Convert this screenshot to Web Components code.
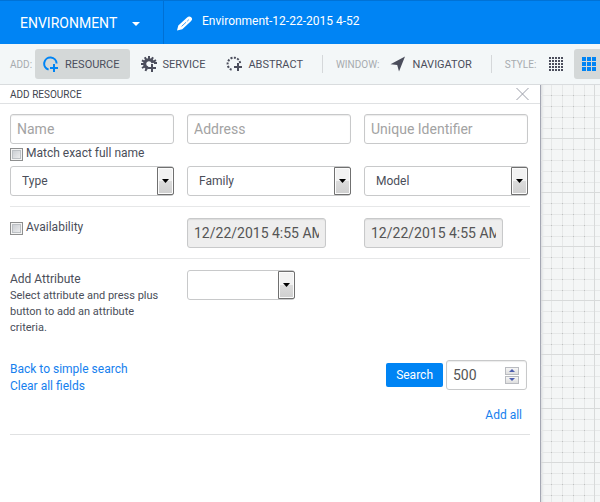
<!DOCTYPE html>
<html lang="en">
<head>
<meta charset="utf-8">
<meta name="viewport" content="width=device-width, initial-scale=1">
<title>Environment-12-22-2015 4-52</title>
<style>
  :root {
    --blue: #0084f4;
    --ink: #4a4e59;
    --icon: #4b4e5c;
    --muted: #a7abaf;
    --edge: #c8c9ca;
  }
  body {
    margin: 0;
    min-height: 100vh;
    display: flex;
    flex-direction: column;
    overflow: hidden;
    background: #fff;
    color: var(--ink);
    font: 12px/17px Roboto, "Liberation Sans", sans-serif;
  }
</style>
</head>
<body>
<app-header environment="Environment-12-22-2015 4-52"></app-header>
<app-toolbar></app-toolbar>
<app-workspace>
  <resource-panel slot="panel"></resource-panel>
  <grid-canvas></grid-canvas>
</app-workspace>

<script>
const define = (name, html, ready) => {
  const template = document.createElement('template');
  template.innerHTML = html;
  customElements.define(name, class extends HTMLElement {
    connectedCallback() {
      if (this.shadowRoot) return;
      const root = this.attachShadow({ mode: 'open' });
      root.append(template.content.cloneNode(true));
      if (ready) ready(this, root);
    }
  });
};

define('text-field', `
  <style>
    :host { display: block; min-width: 0; }
    input {
      display: block; width: 100%; height: 30px; box-sizing: border-box;
      padding: 0 6px; border: 1px solid var(--edge); border-radius: 3px;
      background: #fff; color: #555; font: inherit; font-size: 14px;
      box-shadow: inset 0 1px 1px rgba(0,0,0,.08);
    }
    input::placeholder { color: #a3a3a3; opacity: 1; }
    input:disabled { background: #eee; opacity: 1; }
  </style>
  <input type="text">`, (host, root) => {
    const input = root.querySelector('input');
    input.setAttribute('aria-label', host.getAttribute('label'));
    input.placeholder = host.getAttribute('placeholder') || '';
    input.value = host.getAttribute('value') || '';
    input.disabled = host.hasAttribute('disabled');
  });

define('select-field', `
  <style>
    :host { display: block; min-width: 0; }
    .box { display: grid; }
    select, .drop { grid-area: 1 / 1; }
    select {
      appearance: none; width: 100%; height: 30px; box-sizing: border-box; margin: 0;
      padding: 1px 20px 0 11px; border: 1px solid var(--edge); border-radius: 3px;
      background: #fff; color: var(--ink); font: inherit;
    }
    .drop {
      justify-self: end; width: 17px; height: 28px; margin-top: 1px; box-sizing: border-box;
      border: 1px solid #707070; border-radius: 0 2px 2px 0;
      box-shadow: inset 0 0 0 1px #fcfcfc; pointer-events: none;
      background: linear-gradient(#f2f2f2 50%, #dcdcdc 50%, #cfcfcf);
      display: grid; place-items: center;
    }
  </style>
  <div class="box">
    <select><option></option></select>
    <span class="drop"><svg width="7" height="4" viewBox="0 0 7 4"><path d="M0 0h7L3.500 4z"/></svg></span>
  </div>`, (host, root) => {
    root.querySelector('select').setAttribute('aria-label', host.getAttribute('label'));
    root.querySelector('option').textContent = host.getAttribute('value') || '';
  });

define('check-field', `
  <style>
    :host { display: block; }
    label { display: flex; gap: 3px; align-items: flex-start; line-height: 19px; }
    input {
      appearance: none; flex: none; width: 13px; height: 13px; margin: 4px 0 0; box-sizing: border-box;
      border: 1px solid #8e8f8f; background: linear-gradient(135deg, #c3c7cd, #f4f4f4);
      box-shadow: inset 0 0 0 1px #f4f4f4, inset 0 0 0 2px #bcc0c4;
    }
    input:checked { background: var(--blue); }
  </style>
  <label><input type="checkbox"><slot></slot></label>`);

define('number-field', `
  <style>
    :host { display: grid; width: 81px; }
    input, .spin { grid-area: 1 / 1; }
    input {
      appearance: textfield; width: 100%; height: 30px; box-sizing: border-box; margin: 0;
      padding: 0 24px 0 6px; border: 1px solid var(--edge); border-radius: 3px;
      color: #555; font: inherit; font-size: 14px; background: #fff;
      box-shadow: inset 0 1px 1px rgba(0,0,0,.08);
    }
    input::-webkit-inner-spin-button { appearance: none; }
    .spin { justify-self: end; align-self: center; margin-right: 8px; width: 14px; height: 17px; display: grid; gap: 1px; }
    button {
      display: grid; place-items: center; padding: 0; height: 8px; min-height: 0;
      border: 1px solid #b9bbc0; background: linear-gradient(#f6f6f6, #dedede);
    }
  </style>
  <input type="number" value="500" aria-label="Maximum results">
  <span class="spin">
    <button aria-label="Increase"><svg width="6" height="3" viewBox="0 0 6 3"><path d="M0 3L3 0l3 3z" fill="#4e5fae"/></svg></button>
    <button aria-label="Decrease"><svg width="6" height="3" viewBox="0 0 6 3"><path d="M0 0l3 3 3-3z" fill="#4e5fae"/></svg></button>
  </span>`, (host, root) => {
    const input = root.querySelector('input');
    const [up, down] = root.querySelectorAll('button');
    up.onclick = () => input.stepUp();
    down.onclick = () => input.stepDown();
  });

define('app-header', `
  <style>
    :host { display: flex; height: 44px; box-sizing: border-box; background: var(--blue); border-top: 1px solid #0072d6; color: #fff; }
    .menu {
      display: flex; align-items: center; gap: 15px; width: 164px; box-sizing: border-box; padding: 2px 0 0 20px;
      border: 0; border-right: 1px solid #0070d4; background: none; color: inherit; font: inherit; font-size: 14px;
    }
    .name { display: flex; align-items: center; gap: 9px; padding: 0 0 2px 13px; }
    .name svg { margin-top: 4px; }
    h1 { margin: 0; font: inherit; }
  </style>
  <button class="menu">ENVIRONMENT
    <svg width="8" height="4" viewBox="0 0 8 4"><path d="M0 0h8L4 4z" fill="#fff"/></svg>
  </button>
  <div class="name">
    <svg width="16" height="15" viewBox="0 0 16 15">
      <path d="M0 14.500L1.300 9.600 9.800 1.700Q12.200-.6 14.200 1.200 16.200 3.200 13.900 5.300L5.300 13.200z" fill="#fff"/>
      <path d="M4.600 10.400l4.600-4.300M10.200 5.200l1.600-1.500" stroke="#3d9ff5" fill="none"/>
    </svg>
    <h1></h1>
  </div>`, (host, root) => {
    root.querySelector('h1').textContent = host.getAttribute('environment');
  });

define('tool-button', `
  <style>
    :host { display: block; }
    button {
      display: flex; align-items: center; gap: 6px; height: 30px; padding: 0 10px 0 8px;
      border: 0; border-radius: 3px; background: none; color: inherit; font: inherit; white-space: nowrap;
    }
    :host([active]) button { background: #d4d8d8; }
    :host([icon-only]) button { gap: 0; padding: 0 8px; }
    ::slotted(svg) { display: block; flex: none; }
  </style>
  <button><slot name="icon"></slot><slot></slot></button>`, (host, root) => {
    if (host.hasAttribute('label')) root.querySelector('button').setAttribute('aria-label', host.getAttribute('label'));
  });

define('app-toolbar', `
  <style>
    :host { display: flex; align-items: center; height: 41px; box-sizing: border-box; padding-left: 10px; background: #f3f7f8; border-bottom: 1px solid #d9dcde; color: var(--icon); font-size: 11px; overflow: hidden; }
    .group { display: flex; align-items: center; flex: none; gap: 3px; }
    .group + .group {
      margin-left: 9px; padding-left: 14px;
      background: linear-gradient(#d5d8da, #d5d8da) left center / 1px 18px no-repeat;
    }
    .cap { color: var(--muted); font-size: 10px; }
    .style .cap { margin-right: 2px; }
  </style>
  <div class="group">
    <span class="cap">ADD:</span>
    <tool-button active>
      <svg slot="icon" width="16" height="16" viewBox="0 0 16 16" fill="none" stroke="#0084f4" stroke-width="2"><path d="M5.600 13.600A6.200 6.200 0 1 1 13.600 7.500M11 8v8M7 12h8"/></svg>RESOURCE</tool-button>
    <tool-button>
      <svg slot="icon" width="16" height="16" viewBox="0 0 16 16" fill="none" stroke="#4b4e5c"><path d="M7 12A4.200 4.200 0 1 1 12 7" stroke-width="3"/><path d="M8 0v3M3.800 1.200l1.300 2.300M.9 4.400l2.500 1.200M0 8h3M1 12l2.500-1.500M4.500 15l1-2.600M12 1.200l-1.300 2.300M15 4.200l-2.500 1.400M13 7h3" stroke-width="2"/><path d="M11 8v8M7 12h8" stroke-width="2"/></svg>SERVICE</tool-button>
    <tool-button>
      <svg slot="icon" width="16" height="16" viewBox="0 0 16 16" fill="none" stroke="#4b4e5c" stroke-width="2"><path d="M5.600 13.800A6.300 6.300 0 1 1 14.200 8" stroke-dasharray="2 1.400"/><path d="M12 7v8M8 11h8"/></svg>ABSTRACT</tool-button>
  </div>
  <div class="group">
    <span class="cap">WINDOW:</span>
    <tool-button>
      <svg slot="icon" width="16" height="16" viewBox="0 0 16 16"><path d="M15 .5L9 15.500 7.200 9 .5 8.200z" fill="#4b4e5c"/></svg>NAVIGATOR</tool-button>
  </div>
  <div class="group style">
    <span class="cap">STYLE:</span>
    <tool-button icon-only label="Small grid">
      <svg slot="icon" width="14" height="14" viewBox="0 0 14 14" id="small"></svg></tool-button>
    <tool-button icon-only active label="Large grid">
      <svg slot="icon" width="14" height="14" viewBox="0 0 14 14" id="large"></svg></tool-button>
  </div>`, (host, root) => {
    const cells = (count, pitch, size, color) => {
      let d = '';
      for (let y = 0; y < count; y++) for (let x = 0; x < count; x++)
        d += `M${x * pitch} ${y * pitch}h${size}v${size}h-${size}z`;
      return `<path fill="${color}" d="${d}"/>`;
    };
    root.getElementById('small').innerHTML = cells(5, 3, 2, '#4b4e5c');
    root.getElementById('large').innerHTML = cells(3, 5, 4, '#0084f4');
  });

define('app-workspace', `
  <style>
    :host { display: flex; flex: 1; }
    ::slotted([slot=panel]) { flex: 0 1 541px; min-width: 0; }
    ::slotted(grid-canvas) { flex: 1; }
  </style>
  <slot name="panel"></slot><slot></slot>`);

define('grid-canvas', `
  <style>
    :host { display: grid; min-width: 0; background: #f4f6f6; box-shadow: inset 3px 0 3px -2px #d5d7da; }
    svg { width: 100%; height: 100%; }
  </style>
  <svg aria-hidden="true" shape-rendering="crispEdges">
    <defs>
      <pattern id="grid" width="54" height="54" x="-1" y="-1" patternUnits="userSpaceOnUse">
        <path fill="#e6e8e8" d="M11 0h1v54h-1zM22 0h1v54h-1zM33 0h1v54h-1zM44 0h1v54h-1zM0 11h54v1H0zM0 22h54v1H0zM0 33h54v1H0zM0 44h54v1H0z"/>
        <path id="dots" fill="#bfc1c1"/>
        <path fill="#d8dada" d="M0 0h54v1H0zM0 0h1v54H0z"/>
      </pattern>
    </defs>
    <rect width="100%" height="100%" fill="url(#grid)"/>
  </svg>`, (host, root) => {
    const stops = [11, 22, 33, 44];
    root.getElementById('dots').setAttribute('d',
      stops.map(y => stops.map(x => `M${x} ${y}h1v1h-1z`).join('')).join(''));
  });

define('resource-panel', `
  <style>
    :host { display: block; box-sizing: border-box; border-right: 1px solid #a4a7b3; background: #fff; }
    header { display: flex; align-items: center; justify-content: space-between; height: 19px; box-sizing: border-box; padding: 0 11px 0 10px; border-bottom: 1px solid #dfe1e3; }
    h2 { margin: 0; font: inherit; font-size: 10px; color: #41444e; }
    .close { display: block; padding: 0; border: 0; background: none; }
    .close svg { display: block; }
    form { padding: 10px 10px 0; }
    .row { display: grid; grid-template-columns: repeat(3, minmax(0, 164px)); column-gap: 13px; }
    .match { margin-bottom: 4px; height: 18px; }
    hr { height: 1px; margin: 10px 0 11px; border: 0; background: #e6e7e8; }
    .short { width: 85%; }
    .attr { width: 66%; }
    .hint { line-height: 18px; }
    p { margin: 0; padding-right: 10px; font-size: 11px; line-height: 16px; }
    .actions { display: flex; justify-content: space-between; align-items: flex-start; margin-top: 24px; padding-right: 3px; }
    .links { padding-top: 1px; }
    .run { display: flex; align-items: center; gap: 3px; }
    .search { height: 24px; padding: 0 10px; border: 0; border-radius: 2px; background: var(--blue); color: #fff; font: inherit; }
    a { color: #1680ee; text-decoration: none; }
    .links a { display: block; }
    .all { display: flex; justify-content: flex-end; padding: 12px 8px 0 0; }
    .end { margin: 10px 0 0; background: #e0e1e2; }
  </style>
  <header>
    <h2>ADD RESOURCE</h2>
    <button class="close" aria-label="Close"><svg width="13" height="12" viewBox="0 0 13 12"><path d="M.5 0l12 12M12.500 0L.5 12" stroke="#9a9da8" fill="none"/></svg></button>
  </header>
  <form>
    <div class="row">
      <text-field label="Name" placeholder="Name"></text-field>
      <text-field label="Address" placeholder="Address"></text-field>
      <text-field label="Unique Identifier" placeholder="Unique Identifier"></text-field>
    </div>
    <check-field class="match">Match exact full name</check-field>
    <div class="row">
      <select-field label="Type" value="Type"></select-field>
      <select-field label="Family" value="Family"></select-field>
      <select-field label="Model" value="Model"></select-field>
    </div>
    <hr>
    <div class="row">
      <check-field>Availability</check-field>
      <text-field class="short" label="Available from" value="12/22/2015 4:55 AM" disabled></text-field>
      <text-field class="short" label="Available until" value="12/22/2015 4:55 AM" disabled></text-field>
    </div>
    <hr>
    <div class="row">
      <div class="hint">Add Attribute<p>Select attribute and press plus button to add an attribute criteria.</p></div>
      <select-field class="attr" label="Attribute"></select-field>
    </div>
    <div class="actions">
      <div class="links"><a href="#simple">Back to simple search</a><a href="#clear">Clear all fields</a></div>
      <div class="run"><button class="search" type="button">Search</button><number-field></number-field></div>
    </div>
    <div class="all"><a href="#all">Add all</a></div>
    <hr class="end">
  </form>`);
</script>
</body>
</html>
